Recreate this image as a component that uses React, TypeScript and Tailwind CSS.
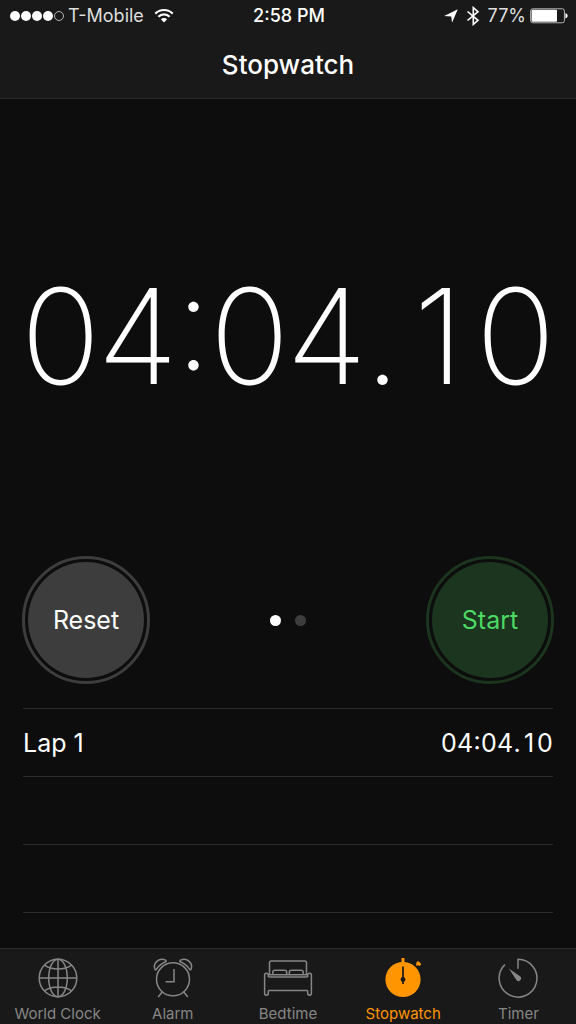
import type { ReactNode } from "react";

const LAPS = [{ name: "Lap 1", time: "04:04.10" }];
const EMPTY_ROWS = [0, 1];

function WifiIcon() {
  return (
    <svg width="20" height="16" viewBox="0 0 20 16" fill="none" stroke="currentColor" strokeWidth="2.2" aria-hidden="true">
      <path d="M1.3 5.600a12.300 12.300 0 0 1 17.400 0" />
      <path d="M4.400 8.700a7.900 7.900 0 0 1 11.200 0" />
      <path d="M6.900 11.300a4.400 4.400 0 0 1 6.200 0L10 14.600z" fill="currentColor" stroke="none" />
    </svg>
  );
}

function LocationIcon() {
  return (
    <svg width="14" height="14" viewBox="0 0 14 14" fill="currentColor" aria-hidden="true">
      <path d="M13.800 0.200 8 13.700 7.300 7.400 0.200 6.900z" />
    </svg>
  );
}

function BluetoothIcon() {
  return (
    <svg width="14" height="20" viewBox="0 0 14 20" fill="none" stroke="currentColor" strokeWidth="1.600" aria-hidden="true">
      <path d="M1.500 5.500 12 14.300 7.300 18.400V1.600L12 5.700 1.500 14.500" />
    </svg>
  );
}

function BatteryIcon() {
  return (
    <svg width="38" height="16" viewBox="0 0 38 16" aria-hidden="true">
      <rect x="0.600" y="0.800" width="33.800" height="14" rx="2.200" fill="none" stroke="#b5b5b5" strokeWidth="1" />
      <rect x="1.600" y="1.800" width="25.400" height="12" rx="1" fill="#fff" />
      <path d="M35.400 5.200c3 .6 3 4.600 0 5.200z" fill="#fff" />
    </svg>
  );
}

function TabIcon({ children }: { children: ReactNode }) {
  return (
    <svg width="52" height="44" viewBox="0 0 52 44" fill="none" stroke="currentColor" strokeWidth="1.500" aria-hidden="true">
      {children}
    </svg>
  );
}

const TABS = [
  {
    label: "World Clock",
    icon: (
      <TabIcon>
        <circle cx="26" cy="22" r="18.800" />
        <ellipse cx="26" cy="22" rx="9.300" ry="18.800" />
        <path d="M26 3.200v37.600M7.200 22h37.600M12.500 9.200c7 5.200 20 5.200 27 0M12.500 34.800c7-5.200 20-5.200 27 0" />
      </TabIcon>
    ),
  },
  {
    label: "Alarm",
    icon: (
      <TabIcon>
        <circle cx="26" cy="23.300" r="16.500" />
        <path d="M27 13v12.700h-8.400" />
        <path d="M15.600 35.500 11.200 41M36.400 35.500 40.800 41" />
        <path d="M8 13.400C5.500 7.500 12 1 18.500 4.200c.8.400.9 1.200.2 1.600-3.800 1.500-7 4-9.200 7.400-.4.800-1.200.8-1.500.2z" />
        <path d="M44 13.400C46.500 7.500 40 1 33.500 4.200c-.8.400-.9 1.200-.2 1.600 3.800 1.500 7 4 9.200 7.400.4.800 1.200.8 1.500.2z" />
      </TabIcon>
    ),
  },
  {
    label: "Bedtime",
    icon: (
      <TabIcon>
        <path d="M7.500 18.500V7a2 2 0 0 1 2-2h33a2 2 0 0 1 2 2v11.500" />
        <path d="M10.800 18.800v-2.600a2 2 0 0 1 2-2h9.900a2 2 0 0 1 2 2v2.600M27.300 18.800v-2.600a2 2 0 0 1 2-2h9.900a2 2 0 0 1 2 2v2.600" />
        <path d="M6.300 18.800h39.400M6.300 20.900h39.400M6.300 34.500h39.400" />
        <path d="M6.300 34.500v2.800a1.850 1.850 0 0 1-3.700 0V19a1.850 1.850 0 0 1 3.700 0v1.900M45.700 34.500v2.800a1.850 1.850 0 0 0 3.700 0V19a1.850 1.850 0 0 0-3.700 0v1.900" />
      </TabIcon>
    ),
  },
  {
    label: "Stopwatch",
    active: true,
    icon: (
      <TabIcon>
        <circle cx="26" cy="23.500" r="17.600" fill="currentColor" stroke="none" />
        <path d="M26 2v6" strokeWidth="3" />
        <path d="M39.400 9.400l2-2.200" strokeWidth="1.800" />
        <path d="M40 6l3.400 3.200" strokeWidth="3" />
        <path d="M26 10.500v17.500" stroke="#191919" strokeWidth="1.700" />
        <circle cx="26" cy="23.500" r="2.400" fill="#191919" stroke="none" />
      </TabIcon>
    ),
  },
  {
    label: "Timer",
    icon: (
      <TabIcon>
        <path d="M26 12.800V3.300A18.900 18.900 0 1 1 12.900 8.600" />
        <path d="M16.800 12.500 28 20.300a2.600 2.600 0 1 1-3.600 3.700z" fill="currentColor" stroke="none" />
      </TabIcon>
    ),
  },
];

function TimeDigits({ time, digit, mark }: { time: string; digit: string; mark: string }) {
  return (
    <span className="inline-flex [font-feature-settings:'case']">
      {time.split("").map((char, index) => (
        <span key={index} className={"flex justify-center " + (/\d/.test(char) ? digit : mark)}>
          {char}
        </span>
      ))}
    </span>
  );
}

function StatusBar() {
  return (
    <div className="grid h-8 grid-cols-[1fr_auto_1fr] items-center pr-2 pl-2.5 text-[18px] leading-6">
      <div className="flex items-center gap-1 text-[#dedede]">
        <div className="flex gap-px" role="img" aria-label="Signal strength 4 of 5">
          <span className="size-2.5 rounded-full bg-white" />
          <span className="size-2.5 rounded-full bg-white" />
          <span className="size-2.5 rounded-full bg-white" />
          <span className="size-2.5 rounded-full bg-white" />
          <span className="size-2.5 rounded-full border border-[#b5b5b5]" />
        </div>
        <span>T-Mobile</span>
        <span className="pl-1.5 text-white">
          <WifiIcon />
        </span>
      </div>
      <span className="font-medium">2:58 PM</span>
      <div className="flex items-center justify-end">
        <LocationIcon />
        <span className="pl-2">
          <BluetoothIcon />
        </span>
        <span className="pr-1 pl-2 text-[#dedede]">77%</span>
        <BatteryIcon />
      </div>
    </div>
  );
}

export default function App() {
  return (
    <div className="flex min-h-screen flex-col bg-[#0d0d0d] font-['Inter','Liberation_Sans',sans-serif] text-white">
      <header className="border-b border-[#2b2b2b] bg-[#191919]">
        <StatusBar />
        <h1 className="flex h-[66px] items-center justify-center text-[26px] leading-8 font-medium">Stopwatch</h1>
      </header>

      <main className="flex flex-1 flex-col px-[22px]">
        <div className="flex flex-1 items-center justify-center pt-4 text-[132px] leading-none font-extralight" role="timer">
          <TimeDigits time="04:04.10" digit="w-[77px]" mark="w-[35px]" />
        </div>

        <div className="flex items-center justify-between">
          <button
            type="button"
            className="size-32 rounded-full border-3 border-[#3d3d3d] p-[3px] text-[25px] leading-8"
          >
            <span className="flex size-full items-center justify-center rounded-full bg-[#3d3d3d]">Reset</span>
          </button>
          <div className="flex gap-3.5">
            <button type="button" aria-label="Digital display" className="size-[11px] rounded-full bg-white" />
            <button type="button" aria-label="Analog display" className="size-[11px] rounded-full bg-[#3d3d3d]" />
          </div>
          <button
            type="button"
            className="size-32 rounded-full border-3 border-[#1c351f] p-[3px] text-[25px] leading-8 text-[#4cd964]"
          >
            <span className="flex size-full items-center justify-center rounded-full bg-[#1c351f]">Start</span>
          </button>
        </div>

        <div className="h-[264px] px-px pt-6">
          <table className="w-full border-t border-[#2b2b2b] text-[25px] leading-8" aria-label="Laps">
            <tbody>
              {LAPS.map((lap) => (
                <tr key={lap.name} className="h-[68px] border-b border-[#2b2b2b]">
                  <th scope="row" className="text-left font-normal">
                    {lap.name}
                  </th>
                  <td className="text-right align-middle">
                    <TimeDigits time={lap.time} digit="w-4" mark="w-2" />
                  </td>
                </tr>
              ))}
              {EMPTY_ROWS.map((row) => (
                <tr key={row} className="h-[68px] border-b border-[#2b2b2b]">
                  <td colSpan={2} />
                </tr>
              ))}
            </tbody>
          </table>
        </div>
      </main>

      <nav className="grid h-[76px] grid-cols-5 border-t border-[#2b2b2b] bg-[#191919] pt-[7px] text-[15px] leading-5">
        {TABS.map((tab) => (
          <a
            key={tab.label}
            href={"#" + tab.label}
            aria-current={tab.active ? "page" : undefined}
            className={
              tab.active
                ? "flex flex-col items-center gap-1 text-[#ff9500]"
                : "flex flex-col items-center gap-1 text-[#868686]"
            }
          >
            {tab.icon}
            {tab.label}
          </a>
        ))}
      </nav>
    </div>
  );
}
